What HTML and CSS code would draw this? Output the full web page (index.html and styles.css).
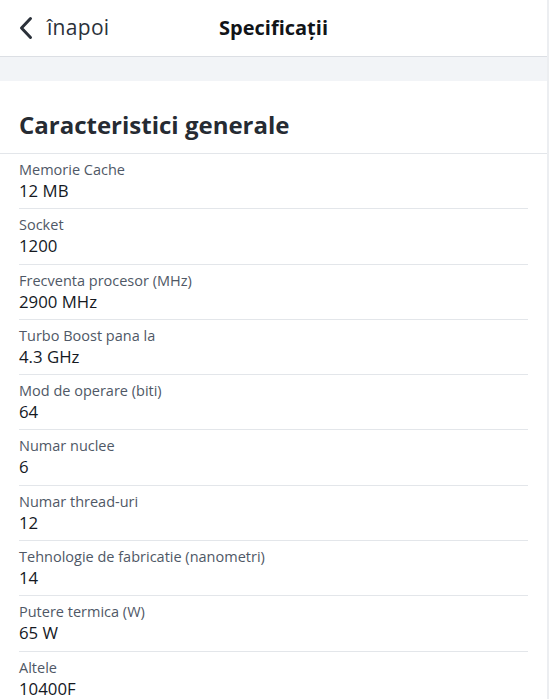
FILE: index.html
```html
<!DOCTYPE html>
<html lang="ro">
<head>
<meta charset="utf-8">
<title>Specificații</title>
<link rel="stylesheet" href="styles.css">
</head>
<body>
<div class="page">
  <header class="topbar">
    <a class="back" href="#">
      <svg class="chev" width="14" height="24" viewBox="0 0 14 24"><path d="M11.5 2.5 L2.5 12 L11.5 21.5" fill="none" stroke="#2b313a" stroke-width="3" stroke-linecap="round" stroke-linejoin="round"/></svg>
      <span>înapoi</span>
    </a>
    <h1 class="title">Specificații</h1>
  </header>
  <div class="band"></div>
  <section class="section">
    <h2 class="section-title">Caracteristici generale</h2>
    <ul class="specs">
      <li class="row"><div class="label">Memorie Cache</div><div class="value">12 MB</div></li>
      <li class="row"><div class="label">Socket</div><div class="value">1200</div></li>
      <li class="row"><div class="label">Frecventa procesor (MHz)</div><div class="value">2900 MHz</div></li>
      <li class="row"><div class="label">Turbo Boost pana la</div><div class="value">4.3 GHz</div></li>
      <li class="row"><div class="label">Mod de operare (biti)</div><div class="value">64</div></li>
      <li class="row"><div class="label">Numar nuclee</div><div class="value">6</div></li>
      <li class="row"><div class="label">Numar thread-uri</div><div class="value">12</div></li>
      <li class="row"><div class="label">Tehnologie de fabricatie (nanometri)</div><div class="value">14</div></li>
      <li class="row"><div class="label">Putere termica (W)</div><div class="value">65 W</div></li>
      <li class="row"><div class="label">Altele</div><div class="value">10400F</div></li>
    </ul>
  </section>
</div>
</body>
</html>
```

FILE: styles.css
```css
* { box-sizing: border-box; }
html, body { margin: 0; padding: 0; background: #fff; }
body {
  font-family: "Open Sans", "Noto Sans", sans-serif;
  color: #1d222a;
  height: 699px;
  overflow: hidden;
}
.page {
  border-right: 2px solid #eceef1;
  min-height: 698px;
  border-bottom: 1px solid #d8dbe0;
}
.topbar {
  height: 57px;
  border-bottom: 1px solid #dcdfe4;
  display: flex;
  align-items: center;
  position: relative;
}
.back {
  display: flex;
  align-items: center;
  gap: 14px;
  padding-left: 19px;
  text-decoration: none;
  color: #2b313a;
  font-size: 21px;
  line-height: 28px;
}
.back span { margin-top: -2px; letter-spacing: 0.3px; }
.title {
  position: absolute;
  left: 0;
  right: 0;
  top: 0;
  height: 56px;
  margin: 0;
  display: flex;
  align-items: center;
  justify-content: center;
  font-size: 20px;
  font-weight: 700;
  color: #111418;
  pointer-events: none;
  padding-bottom: 2px;
}
.band {
  height: 24px;
  background: #f2f4f7;
}
.section-title {
  margin: 0;
  padding: 28px 19px 12px;
  font-size: 24px;
  line-height: 32px;
  font-weight: 700;
  color: #262b33;
  border-bottom: 1px solid #e3e6ea;
}
.specs {
  list-style: none;
  margin: 0;
  padding: 0 19px;
}
.row {
  padding: 6px 0 6.3px;
  border-bottom: 1px solid #e3e6ea;
}
.label {
  font-size: 14.5px;
  line-height: 20px;
  color: #4f5866;
  font-weight: 500;
}
.value {
  font-size: 16.8px;
  line-height: 22px;
  color: #15191f;
  font-weight: 500;
}
```
